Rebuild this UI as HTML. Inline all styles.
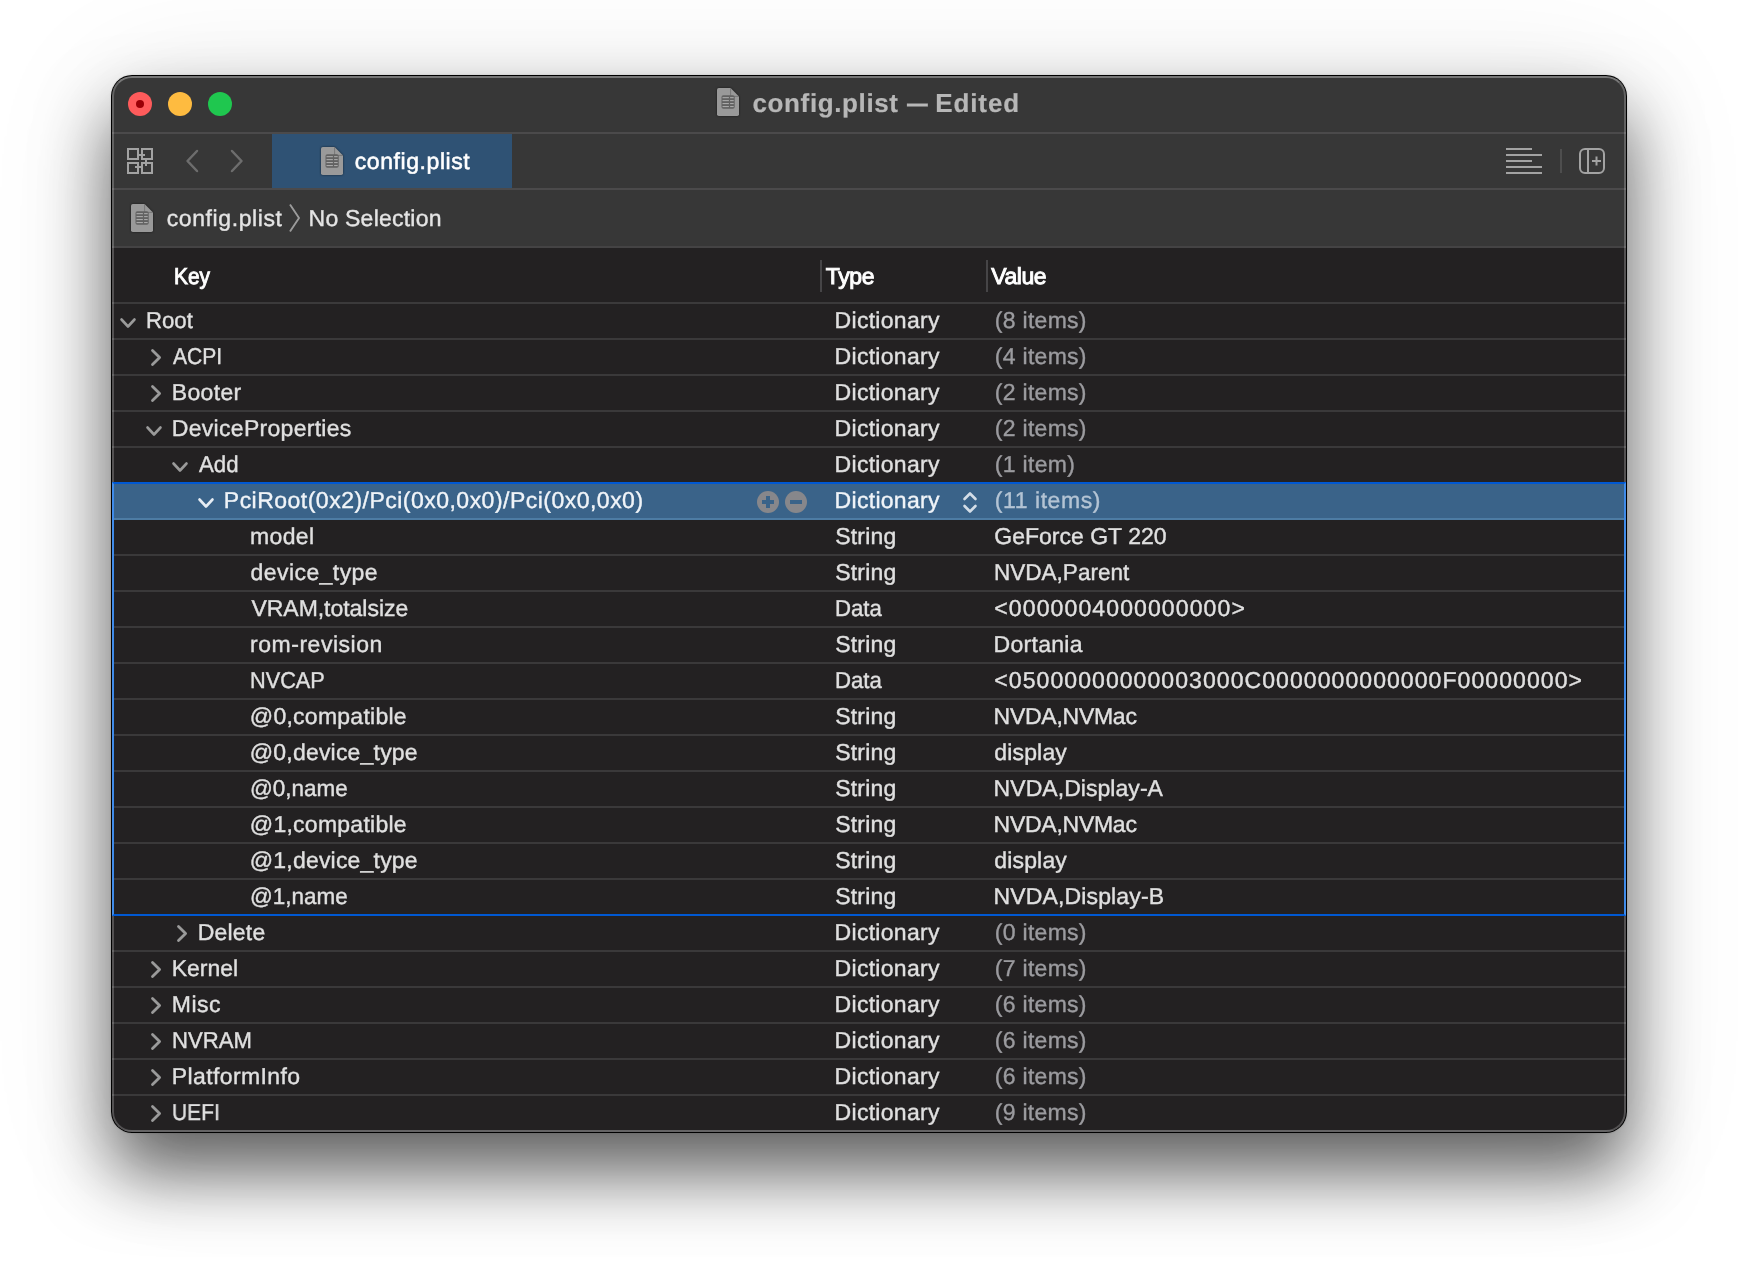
<!DOCTYPE html>
<html lang="en">
<head>
<meta charset="utf-8">
<title>config.plist — Edited</title>
<style>
*{box-sizing:border-box;margin:0;padding:0}
html,body{width:1738px;height:1280px;background:#fff;overflow:hidden}
body{position:relative;font-family:"Liberation Sans",sans-serif;font-size:23px;color:#dfdfdf;-webkit-text-stroke:0.38px;text-rendering:geometricPrecision}
#shadow{position:absolute;left:111px;top:75px;width:1516px;height:1058px;border-radius:21px;
  box-shadow:0 40px 70px rgba(0,0,0,.6),0 10px 130px rgba(0,0,0,.1),0 0 2px rgba(0,0,0,.18)}
#win{position:absolute;left:111px;top:75px;width:1516px;height:1058px;border-radius:21px;background:#000;overflow:hidden}
#inner{will-change:transform;position:absolute;left:1px;top:1px;width:1514px;height:1056px;border-radius:20px;overflow:hidden;background:#232122}
#rim{position:absolute;left:0;top:0;width:1514px;height:1056px;border-radius:20px;border:2px solid rgba(255,255,255,.22);border-top-color:rgba(255,255,255,.32);pointer-events:none;z-index:50}
.abs{position:absolute}
span{position:absolute;white-space:pre;line-height:36px;height:36px;transform-origin:0 0}
#titlebar{position:absolute;left:0;top:0;width:1514px;height:58px;background:#373737;border-bottom:2px solid #4b4a4b}
#title{position:absolute;left:0;top:8.5px;height:36px;width:1514px;font-size:26px;font-weight:700;color:#b7b7b7;-webkit-text-stroke:0.2px}
#tabbar{position:absolute;left:0;top:58px;width:1514px;height:56px;background:#373737;border-bottom:2px solid #4b4a4b}
#crumbs{position:absolute;left:0;top:114px;width:1514px;height:58px;background:#373737;border-bottom:2px solid #444344}
#tab{position:absolute;left:160px;top:0;width:240px;height:54px;background:#2f5274}
.tl{position:absolute;top:16px;width:24px;height:24px;border-radius:50%}
#thead{position:absolute;left:0;top:172px;width:1514px;height:56px;border-bottom:2px solid #3b3a3b}
#thead span{color:#fff;-webkit-text-stroke:0.95px}
.coldiv{position:absolute;top:12px;width:2px;height:32px;background:#464547}
.row{position:absolute;left:0;width:1514px;height:36px;border-bottom:2px solid #3a393a}
.row span{top:-2.5px}
.k{color:#e0e0e0}.t{color:#e0e0e0}.v{color:#e0e0e0}.g{color:#9b9b9f}
.sel{background:#3a6389;border-bottom-color:#4d7ca4}
.sel .k,.sel .t{color:#f0f4f8}.sel .g{color:#b4c4d4}
svg{position:absolute;overflow:visible}
#focus{position:absolute;left:0;top:406px;width:1514px;height:434px;border:2px solid #0058d2;border-left-color:#3f8be9;border-right-color:#3f8be9;z-index:60;pointer-events:none}
</style>
</head>
<body>
<div id="shadow"></div>
<div id="win"><div id="inner">

<div id="titlebar">
<div class="tl" style="left:16px;background:#fe5b5b"><div class="abs" style="left:8px;top:8px;width:8px;height:8px;border-radius:50%;background:#9a0006"></div></div>
<div class="tl" style="left:56px;background:#febb40"></div>
<div class="tl" style="left:96px;background:#1fc74f"></div>
<svg style="left:605px;top:12px;filter:drop-shadow(0 .5px 1px rgba(0,0,0,.55))" width="22" height="28" viewBox="0 0 22 28"><path d="M1.8 0H13.6L22 8.4V26.2Q22 28 20.2 28H1.8Q0 28 0 26.2V1.8Q0 0 1.8 0Z" fill="#999999"/><path d="M13.6 0V7.2Q13.6 8.4 14.799999999999999 8.4H22" fill="none" stroke="#6f6f6f" stroke-width="1" opacity=".8"/><rect x="4.5" y="7.2" width="13.2" height="13.6" rx="1.8" fill="#626262"/><rect x="5.5" y="9.1" width="6.4" height="1.1" fill="#a9a9a9"/><rect x="13.1" y="9.1" width="3.6" height="1.1" fill="#a9a9a9"/><rect x="5.5" y="12.05" width="6.4" height="1.1" fill="#a9a9a9"/><rect x="13.1" y="12.05" width="3.6" height="1.1" fill="#a9a9a9"/><rect x="5.5" y="15.0" width="6.4" height="1.1" fill="#a9a9a9"/><rect x="13.1" y="15.0" width="3.6" height="1.1" fill="#a9a9a9"/><rect x="5.5" y="18.0" width="6.4" height="1.1" fill="#a9a9a9"/><rect x="13.1" y="18.0" width="3.6" height="1.1" fill="#a9a9a9"/></svg>
<div id="title"><span style="left:640.50px;letter-spacing:0.624px">config.plist</span> <span style="left:795.41px;transform:scaleX(0.7984);-webkit-text-stroke:0.25px">—</span> <span style="left:823.13px;letter-spacing:0.918px">Edited</span></div>
</div>
<div id="tabbar">
<svg style="left:15px;top:14px" width="26" height="26" viewBox="0 0 26 26" fill="none" stroke="#a3a3a3" stroke-width="2"><rect x="1" y="1" width="10" height="10"/><rect x="15" y="1" width="10" height="10"/><rect x="1" y="15" width="10" height="10"/><rect x="15" y="15" width="10" height="10"/><path d="M11 7H18M19 12V18M8 19H14"/></svg>
<svg style="left:74px;top:16px" width="12" height="22" viewBox="0 0 12 22" fill="none" stroke="#6d6d6d" stroke-width="2.5" stroke-linecap="round" stroke-linejoin="round"><path d="M11 1L1.5 11L11 21"/></svg>
<svg style="left:119px;top:16px" width="12" height="22" viewBox="0 0 12 22" fill="none" stroke="#6d6d6d" stroke-width="2.5" stroke-linecap="round" stroke-linejoin="round"><path d="M1 1L10.5 11L1 21"/></svg>
<div id="tab">
<svg style="left:49px;top:13px;filter:drop-shadow(0 .5px 1px rgba(0,0,0,.55))" width="22" height="28" viewBox="0 0 22 28"><path d="M1.8 0H13.6L22 8.4V26.2Q22 28 20.2 28H1.8Q0 28 0 26.2V1.8Q0 0 1.8 0Z" fill="#9a9a9a"/><path d="M13.6 0V7.2Q13.6 8.4 14.799999999999999 8.4H22" fill="none" stroke="#6f6f6f" stroke-width="1" opacity=".8"/><rect x="4.5" y="7.2" width="13.2" height="13.6" rx="1.8" fill="#626262"/><rect x="5.5" y="9.1" width="6.4" height="1.1" fill="#a9a9a9"/><rect x="13.1" y="9.1" width="3.6" height="1.1" fill="#a9a9a9"/><rect x="5.5" y="12.05" width="6.4" height="1.1" fill="#a9a9a9"/><rect x="13.1" y="12.05" width="3.6" height="1.1" fill="#a9a9a9"/><rect x="5.5" y="15.0" width="6.4" height="1.1" fill="#a9a9a9"/><rect x="13.1" y="15.0" width="3.6" height="1.1" fill="#a9a9a9"/><rect x="5.5" y="18.0" width="6.4" height="1.1" fill="#a9a9a9"/><rect x="13.1" y="18.0" width="3.6" height="1.1" fill="#a9a9a9"/></svg>
<span style="left:82.76px;top:8.5px;letter-spacing:0.576px;color:#fff;-webkit-text-stroke:0.55px">config.plist</span>
</div>
<svg style="left:1394px;top:14px" width="36" height="26" viewBox="0 0 36 26" stroke="#a3a3a3" stroke-width="2"><path d="M0 2H26M0 8H36M0 14H26M0 20H36M0 26H36" transform="translate(0,-1)"/></svg>
<div class="abs" style="left:1448px;top:15px;width:2px;height:24px;background:#4e4e4e"></div>
<svg style="left:1467px;top:14px" width="26" height="26" viewBox="0 0 26 26" fill="none" stroke="#a3a3a3" stroke-width="2"><rect x="1" y="1" width="24" height="24" rx="5"/><path d="M9 1V25M17.5 8.5V17.5M13 13H22"/></svg>
</div>
<div id="crumbs">
<svg style="left:19px;top:14px;filter:drop-shadow(0 .5px 1px rgba(0,0,0,.55))" width="22" height="28" viewBox="0 0 22 28"><path d="M1.8 0H13.6L22 8.4V26.2Q22 28 20.2 28H1.8Q0 28 0 26.2V1.8Q0 0 1.8 0Z" fill="#999999"/><path d="M13.6 0V7.2Q13.6 8.4 14.799999999999999 8.4H22" fill="none" stroke="#6f6f6f" stroke-width="1" opacity=".8"/><rect x="4.5" y="7.2" width="13.2" height="13.6" rx="1.8" fill="#626262"/><rect x="5.5" y="9.1" width="6.4" height="1.1" fill="#a9a9a9"/><rect x="13.1" y="9.1" width="3.6" height="1.1" fill="#a9a9a9"/><rect x="5.5" y="12.05" width="6.4" height="1.1" fill="#a9a9a9"/><rect x="13.1" y="12.05" width="3.6" height="1.1" fill="#a9a9a9"/><rect x="5.5" y="15.0" width="6.4" height="1.1" fill="#a9a9a9"/><rect x="13.1" y="15.0" width="3.6" height="1.1" fill="#a9a9a9"/><rect x="5.5" y="18.0" width="6.4" height="1.1" fill="#a9a9a9"/><rect x="13.1" y="18.0" width="3.6" height="1.1" fill="#a9a9a9"/></svg>
<span style="left:54.68px;letter-spacing:0.600px;top:10px;color:#e4e4e4">config.plist</span>
<svg style="left:177.4px;top:14.2px" width="11" height="28" viewBox="0 0 11 28" fill="none" stroke="#9a9a9a" stroke-width="1.9"><path d="M1 0.5L10 14L1 27.5"/></svg>
<span style="left:196.55px;letter-spacing:0.233px;top:10px;color:#e4e4e4">No Selection</span>
</div>
<div id="thead">
<span style="left:62.24px;transform:scaleX(0.9050);top:10px">Key</span>
<div class="coldiv" style="left:708px"></div>
<span style="left:713.66px;letter-spacing:-0.311px;top:10px">Type</span>
<div class="coldiv" style="left:874px"></div>
<span style="left:879.37px;letter-spacing:-0.456px;top:10px">Value</span>
</div>
<div class="row" style="top:228px">
<svg style="left:8px;top:14px" width="16" height="10" viewBox="0 0 16 10" fill="none" stroke="#9a9a9a" stroke-width="2.6" stroke-linecap="round" stroke-linejoin="round"><path d="M1.5 1.5L8 8.5L14.5 1.5"/></svg>
<span class="k" style="left:34.11px;transform:scaleX(0.9636)">Root</span>
<span class="t" style="left:722.60px;letter-spacing:0.292px">Dictionary</span>
<span class="v g" style="left:882.82px;letter-spacing:0.283px">(8 items)</span>
</div>
<div class="row" style="top:264px">
<svg style="left:38.5px;top:9px" width="10" height="17" viewBox="0 0 10 17" fill="none" stroke="#9a9a9a" stroke-width="2.8" stroke-linecap="round" stroke-linejoin="round"><path d="M1.5 1.5L8.6 8.5L1.5 15.5"/></svg>
<span class="k" style="left:61.43px;transform:scaleX(0.9147)">ACPI</span>
<span class="t" style="left:722.60px;letter-spacing:0.292px">Dictionary</span>
<span class="v g" style="left:882.82px;letter-spacing:0.283px">(4 items)</span>
</div>
<div class="row" style="top:300px">
<svg style="left:38.5px;top:9px" width="10" height="17" viewBox="0 0 10 17" fill="none" stroke="#9a9a9a" stroke-width="2.8" stroke-linecap="round" stroke-linejoin="round"><path d="M1.5 1.5L8.6 8.5L1.5 15.5"/></svg>
<span class="k" style="left:59.81px;letter-spacing:0.323px">Booter</span>
<span class="t" style="left:722.60px;letter-spacing:0.292px">Dictionary</span>
<span class="v g" style="left:882.82px;letter-spacing:0.283px">(2 items)</span>
</div>
<div class="row" style="top:336px">
<svg style="left:34px;top:14px" width="16" height="10" viewBox="0 0 16 10" fill="none" stroke="#9a9a9a" stroke-width="2.6" stroke-linecap="round" stroke-linejoin="round"><path d="M1.5 1.5L8 8.5L14.5 1.5"/></svg>
<span class="k" style="left:59.81px;letter-spacing:0.296px">DeviceProperties</span>
<span class="t" style="left:722.60px;letter-spacing:0.292px">Dictionary</span>
<span class="v g" style="left:882.82px;letter-spacing:0.283px">(2 items)</span>
</div>
<div class="row" style="top:372px">
<svg style="left:60px;top:14px" width="16" height="10" viewBox="0 0 16 10" fill="none" stroke="#9a9a9a" stroke-width="2.6" stroke-linecap="round" stroke-linejoin="round"><path d="M1.5 1.5L8 8.5L14.5 1.5"/></svg>
<span class="k" style="left:87.43px;transform:scaleX(0.9658)">Add</span>
<span class="t" style="left:722.60px;letter-spacing:0.292px">Dictionary</span>
<span class="v g" style="left:882.82px;letter-spacing:0.316px">(1 item)</span>
</div>
<div class="row sel" style="top:408px">
<svg style="left:86px;top:14px" width="16" height="10" viewBox="0 0 16 10" fill="none" stroke="#e6edf4" stroke-width="2.6" stroke-linecap="round" stroke-linejoin="round"><path d="M1.5 1.5L8 8.5L14.5 1.5"/></svg>
<span class="k" style="left:111.82px;letter-spacing:0.483px">PciRoot(0x2)/Pci(0x0,0x0)/Pci(0x0,0x0)</span>
<span class="t" style="left:722.61px;letter-spacing:0.292px">Dictionary</span>
<span class="v g" style="left:882.81px;letter-spacing:0.566px">(11 items)</span>
<svg style="left:645px;top:7px" width="50" height="22" viewBox="0 0 50 22"><circle cx="11" cy="11" r="11" fill="#87878b"/><circle cx="39" cy="11" r="11" fill="#87878b"/><path d="M5 11H17M11 5V17M33 11H45" stroke="#3a6389" stroke-width="4"/></svg>
<svg style="left:851px;top:8px" width="14" height="21" viewBox="0 0 14 21" fill="none" stroke="#d3dde7" stroke-width="2.6" stroke-linecap="round" stroke-linejoin="round"><path d="M1.5 7L7 1.5L12.5 7M1.5 14L7 19.5L12.5 14"/></svg>
</div>
<div class="row" style="top:444px">
<span class="k" style="left:138.05px;letter-spacing:0.360px">model</span>
<span class="t" style="left:723.32px;letter-spacing:0.162px">String</span>
<span class="v" style="left:882.25px;letter-spacing:0.011px">GeForce GT 220</span>
</div>
<div class="row" style="top:480px">
<span class="k" style="left:138.50px;letter-spacing:0.437px">device_type</span>
<span class="t" style="left:723.32px;letter-spacing:0.162px">String</span>
<span class="v" style="left:881.83px;transform:scaleX(0.9798)">NVDA,Parent</span>
</div>
<div class="row" style="top:516px">
<span class="k" style="left:139.44px;letter-spacing:-0.034px">VRAM,totalsize</span>
<span class="t" style="left:722.89px;transform:scaleX(0.9647)">Data</span>
<span class="v" style="left:882.32px;letter-spacing:1.117px">&lt;0000004000000000&gt;</span>
</div>
<div class="row" style="top:552px">
<span class="k" style="left:138.12px;letter-spacing:0.508px">rom-revision</span>
<span class="t" style="left:723.32px;letter-spacing:0.162px">String</span>
<span class="v" style="left:881.60px;letter-spacing:0.286px">Dortania</span>
</div>
<div class="row" style="top:588px">
<span class="k" style="left:138.28px;transform:scaleX(0.9442)">NVCAP</span>
<span class="t" style="left:722.89px;transform:scaleX(0.9647)">Data</span>
<span class="v" style="left:882.32px;letter-spacing:1.074px">&lt;05000000000003000C0000000000000F00000000&gt;</span>
</div>
<div class="row" style="top:624px">
<span class="k" style="left:137.84px;letter-spacing:0.252px">@0,compatible</span>
<span class="t" style="left:723.32px;letter-spacing:0.162px">String</span>
<span class="v" style="left:881.60px;letter-spacing:-0.266px">NVDA,NVMac</span>
</div>
<div class="row" style="top:660px">
<span class="k" style="left:137.84px;letter-spacing:0.192px">@0,device_type</span>
<span class="t" style="left:723.32px;letter-spacing:0.162px">String</span>
<span class="v" style="left:882.36px;letter-spacing:0.143px">display</span>
</div>
<div class="row" style="top:696px">
<span class="k" style="left:138.25px;transform:scaleX(0.9767)">@0,name</span>
<span class="t" style="left:723.32px;letter-spacing:0.162px">String</span>
<span class="v" style="left:881.60px;letter-spacing:0.049px">NVDA,Display-A</span>
</div>
<div class="row" style="top:732px">
<span class="k" style="left:137.84px;letter-spacing:0.252px">@1,compatible</span>
<span class="t" style="left:723.32px;letter-spacing:0.162px">String</span>
<span class="v" style="left:881.60px;letter-spacing:-0.266px">NVDA,NVMac</span>
</div>
<div class="row" style="top:768px">
<span class="k" style="left:137.84px;letter-spacing:0.192px">@1,device_type</span>
<span class="t" style="left:723.32px;letter-spacing:0.162px">String</span>
<span class="v" style="left:882.36px;letter-spacing:0.143px">display</span>
</div>
<div class="row" style="top:804px">
<span class="k" style="left:138.25px;transform:scaleX(0.9767)">@1,name</span>
<span class="t" style="left:723.32px;letter-spacing:0.162px">String</span>
<span class="v" style="left:881.60px;letter-spacing:0.134px">NVDA,Display-B</span>
</div>
<div class="row" style="top:840px">
<svg style="left:64.5px;top:9px" width="10" height="17" viewBox="0 0 10 17" fill="none" stroke="#9a9a9a" stroke-width="2.8" stroke-linecap="round" stroke-linejoin="round"><path d="M1.5 1.5L8.6 8.5L1.5 15.5"/></svg>
<span class="k" style="left:85.81px;letter-spacing:0.182px">Delete</span>
<span class="t" style="left:722.60px;letter-spacing:0.292px">Dictionary</span>
<span class="v g" style="left:882.82px;letter-spacing:0.283px">(0 items)</span>
</div>
<div class="row" style="top:876px">
<svg style="left:38.5px;top:9px" width="10" height="17" viewBox="0 0 10 17" fill="none" stroke="#9a9a9a" stroke-width="2.8" stroke-linecap="round" stroke-linejoin="round"><path d="M1.5 1.5L8.6 8.5L1.5 15.5"/></svg>
<span class="k" style="left:59.81px;letter-spacing:-0.031px">Kernel</span>
<span class="t" style="left:722.60px;letter-spacing:0.292px">Dictionary</span>
<span class="v g" style="left:882.82px;letter-spacing:0.283px">(7 items)</span>
</div>
<div class="row" style="top:912px">
<svg style="left:38.5px;top:9px" width="10" height="17" viewBox="0 0 10 17" fill="none" stroke="#9a9a9a" stroke-width="2.8" stroke-linecap="round" stroke-linejoin="round"><path d="M1.5 1.5L8.6 8.5L1.5 15.5"/></svg>
<span class="k" style="left:59.81px;letter-spacing:0.480px">Misc</span>
<span class="t" style="left:722.60px;letter-spacing:0.292px">Dictionary</span>
<span class="v g" style="left:882.82px;letter-spacing:0.283px">(6 items)</span>
</div>
<div class="row" style="top:948px">
<svg style="left:38.5px;top:9px" width="10" height="17" viewBox="0 0 10 17" fill="none" stroke="#9a9a9a" stroke-width="2.8" stroke-linecap="round" stroke-linejoin="round"><path d="M1.5 1.5L8.6 8.5L1.5 15.5"/></svg>
<span class="k" style="left:59.98px;transform:scaleX(0.9607)">NVRAM</span>
<span class="t" style="left:722.60px;letter-spacing:0.292px">Dictionary</span>
<span class="v g" style="left:882.82px;letter-spacing:0.283px">(6 items)</span>
</div>
<div class="row" style="top:984px">
<svg style="left:38.5px;top:9px" width="10" height="17" viewBox="0 0 10 17" fill="none" stroke="#9a9a9a" stroke-width="2.8" stroke-linecap="round" stroke-linejoin="round"><path d="M1.5 1.5L8.6 8.5L1.5 15.5"/></svg>
<span class="k" style="left:59.81px;letter-spacing:0.390px">PlatformInfo</span>
<span class="t" style="left:722.60px;letter-spacing:0.292px">Dictionary</span>
<span class="v g" style="left:882.82px;letter-spacing:0.283px">(6 items)</span>
</div>
<div class="row" style="top:1020px">
<svg style="left:38.5px;top:9px" width="10" height="17" viewBox="0 0 10 17" fill="none" stroke="#9a9a9a" stroke-width="2.8" stroke-linecap="round" stroke-linejoin="round"><path d="M1.5 1.5L8.6 8.5L1.5 15.5"/></svg>
<span class="k" style="left:60.26px;transform:scaleX(0.9124)">UEFI</span>
<span class="t" style="left:722.60px;letter-spacing:0.292px">Dictionary</span>
<span class="v g" style="left:882.81px;letter-spacing:0.272px">(9 items)</span>
</div>
<div id="focus"></div>
<div id="rim"></div>
</div></div>
</body>
</html>
